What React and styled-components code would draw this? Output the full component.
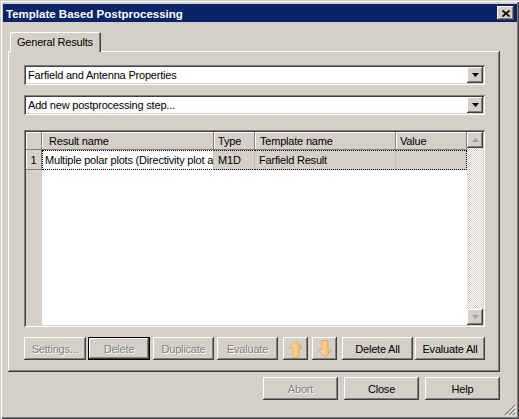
import styled, { createGlobalStyle } from "styled-components";

const GlobalStyle = createGlobalStyle`
  html, body {
    margin: 0;
    padding: 0;
    background: #d4d0c8;
  }
  body {
    font-family: "Liberation Sans", Arial, sans-serif;
    font-size: 11px;
    letter-spacing: -0.2px;
    color: #000;
  }
`;

const raised = `
  box-shadow: inset -1px -1px #404040, inset 1px 1px #fff,
    inset -2px -2px #808080, inset 2px 2px #d4d0c8;
`;

const sunken = `
  box-shadow: inset 1px 1px #808080, inset -1px -1px #fff,
    inset 2px 2px #404040, inset -2px -2px #d4d0c8;
`;

const columns = [
  { id: "res", title: "Result name", width: 172, pad: 7 },
  { id: "type", title: "Type", width: 41, pad: 4 },
  { id: "tpl", title: "Template name", width: 141, pad: 5 },
  { id: "val", title: "Value", width: 71, pad: 4 },
];

const rows = [
  {
    id: 1,
    res: "Multiple polar plots (Directivity plot a",
    type: "M1D",
    tpl: "Farfield Result",
    val: "",
  },
];

const stepButtons = [
  { label: "Settings...", width: 62, ml: 0, disabled: true },
  { label: "Delete", width: 62, ml: 2, disabled: true, isDefault: true },
  { label: "Duplicate", width: 61, ml: 3, disabled: true },
  { label: "Evaluate", width: 61, ml: 3, disabled: true },
];

const ArrowIcon = ({ down }) => (
  <svg width="14" height="18" viewBox="0 0 14 18">
    <defs>
      <linearGradient id={down ? "gd" : "gu"} x1="0" y1="0" x2="1" y2="0">
        <stop offset="0" stopColor="#fde6c0" />
        <stop offset="0.5" stopColor="#f7c98a" />
        <stop offset="1" stopColor="#eeae62" />
      </linearGradient>
    </defs>
    <path
      d={
        down
          ? "M7 17.5 L13.5 10 L10 10 L10 0.5 L4 0.5 L4 10 L0.5 10 Z"
          : "M7 0.5 L13.5 8 L10 8 L10 17.5 L4 17.5 L4 8 L0.5 8 Z"
      }
      fill={`url(#${down ? "gd" : "gu"})`}
      stroke="#e2a868"
      strokeWidth="1"
    />
  </svg>
);

const Triangle = ({ up, color = "#000" }) => (
  <svg width="7" height="4" viewBox="0 0 7 4">
    <path d={up ? "M3.5 0 L7 4 L0 4 Z" : "M0 0 L7 0 L3.5 4 Z"} fill={color} />
  </svg>
);

const App = () => {
  return (
    <>
      <GlobalStyle />
      <Window>
        <TitleBar>
          <Title>Template Based Postprocessing</Title>
          <CloseButton>
            <svg width="8" height="7" viewBox="0 0 8 7">
              <path d="M0.5 0.5 L7.5 6.5 M7.5 0.5 L0.5 6.5" stroke="#000" strokeWidth="1.6" />
            </svg>
          </CloseButton>
        </TitleBar>

        <Content>
          <TabStrip>
            <Tab>General Results</Tab>
          </TabStrip>

          <Panel>
            <Combo>
              <ComboText>Farfield and Antenna Properties</ComboText>
              <ComboArrow>
                <Triangle />
              </ComboArrow>
            </Combo>
            <Combo>
              <ComboText>Add new postprocessing step...</ComboText>
              <ComboArrow>
                <Triangle />
              </ComboArrow>
            </Combo>

            <Table>
              <Grid>
                <HeadCell $corner />
                {columns.map((c) => (
                  <HeadCell key={c.id} $pad={c.pad}>
                    {c.title}
                  </HeadCell>
                ))}
                {rows.map((r) => [
                  <RowHead key={`h${r.id}`}>{r.id}</RowHead>,
                  ...columns.map((c, i) => (
                    <DataCell
                      key={`${r.id}${c.id}`}
                      $current={i === 0}
                      $first={i === 0}
                      $last={i === columns.length - 1}
                      $pad={i === 0 ? 2 : 4}
                    >
                      {r[c.id]}
                    </DataCell>
                  )),
                ])}
                <RowHeadFill />
                <EmptyFill />
              </Grid>
              <ScrollBar>
                <ScrollButton>
                  <Triangle up color="#a0a0a0" />
                </ScrollButton>
                <Track />
                <ScrollButton>
                  <Triangle color="#a0a0a0" />
                </ScrollButton>
              </ScrollBar>
            </Table>

            <ButtonRow>
              {stepButtons.map((b) => (
                <Button
                  key={b.label}
                  $w={b.width}
                  $ml={b.ml}
                  $disabled={b.disabled}
                  $default={b.isDefault}
                >
                  {b.label}
                </Button>
              ))}
              <Button $w={25} $ml={5}>
                <ArrowIcon />
              </Button>
              <Button $w={25} $ml={4}>
                <ArrowIcon down />
              </Button>
              <Button $w={71} $ml={5}>Delete All</Button>
              <Button $w={70} $ml={2}>Evaluate All</Button>
            </ButtonRow>
          </Panel>

          <Footer>
            <Button $w={75} $h={23} $disabled>Abort</Button>
            <Button $w={75} $h={23}>Close</Button>
            <Button $w={75} $h={23}>Help</Button>
          </Footer>
        </Content>

        <Grip>
          <svg width="12" height="12" viewBox="0 0 12 12">
            <path d="M11 1 L1 11 M11 5 L5 11 M11 9 L9 11" stroke="#808080" strokeWidth="1.2" />
            <path d="M12 2 L2 12 M12 6 L6 12 M12 10 L10 12" stroke="#fff" strokeWidth="1" />
          </svg>
        </Grip>
      </Window>
    </>
  );
};

export default App;

const Window = styled.div`
  position: relative;
  width: 519px;
  height: 419px;
  box-sizing: border-box;
  padding: 4px 2px 2px 3px;
  background: #d4d0c8;
  box-shadow: inset 1px 1px #d4d0c8, inset 2px 2px #fff,
    inset -1px -1px #404040, inset -2px -2px #808080;
  overflow: hidden;
`;

const TitleBar = styled.div`
  height: 18px;
  background: #0a246a;
  display: flex;
  align-items: center;
  justify-content: space-between;
  padding: 0 3px 0 3px;
`;

const Title = styled.span`
  color: #fff;
  font-weight: bold;
  font-size: 11.5px;
  letter-spacing: 0;
  padding-top: 1px;
`;

const CloseButton = styled.div`
  width: 17px;
  height: 14px;
  display: flex;
  align-items: center;
  justify-content: center;
  background: #d4d0c8;
  ${raised}
`;

const Content = styled.div`
  width: 492px;
  margin-left: 5px;
  display: flex;
  flex-direction: column;
`;

const TabStrip = styled.div`
  display: flex;
  margin-top: 10px;
  padding-left: 2px;
  position: relative;
  z-index: 1;
  margin-bottom: -1px;
`;

const Tab = styled.div`
  width: 91px;
  height: 20px;
  box-sizing: border-box;
  padding: 4px 0 0 7px;
  background: #d4d0c8;
  border-radius: 2px 2px 0 0;
  box-shadow: inset 1px 1px #fff, inset -1px 0 #404040, inset -2px 0 #808080;
`;

const Panel = styled.div`
  box-sizing: border-box;
  padding: 14px 15px 12px 16px;
  display: flex;
  flex-direction: column;
  ${raised}
`;

const Combo = styled.div`
  height: 20px;
  box-sizing: border-box;
  padding: 2px;
  background: #fff;
  display: flex;
  align-items: stretch;
  margin-bottom: 10px;
  ${sunken}
`;

const ComboText = styled.div`
  flex: 1;
  padding-left: 2px;
  display: flex;
  align-items: center;
`;

const ComboArrow = styled.div`
  width: 16px;
  display: flex;
  align-items: center;
  justify-content: center;
  background: #d4d0c8;
  ${raised}
`;

const Table = styled.div`
  height: 197px;
  margin-top: 5px;
  box-sizing: border-box;
  padding: 2px;
  background: #fff;
  display: flex;
  ${sunken}
`;

const Grid = styled.div`
  flex: 1;
  display: grid;
  grid-template-columns: 16px ${columns.map((c) => `${c.width}px`).join(" ")};
  grid-template-rows: 18px 20px 1fr;
  overflow: hidden;
`;

const HeadCell = styled.div`
  background: #d4d0c8;
  box-sizing: border-box;
  padding-left: ${(p) => p.$pad || 0}px;
  display: flex;
  align-items: center;
  white-space: nowrap;
  overflow: hidden;
  border-right: 1px solid #808080;
  border-bottom: 1px solid #808080;
  box-shadow: inset 1px 1px #fff;
`;

const RowHead = styled.div`
  background: #d4d0c8;
  display: flex;
  align-items: center;
  justify-content: center;
  border-right: 1px solid #808080;
  border-bottom: 1px solid #808080;
  box-shadow: inset 1px 0 #fff;
`;

const DataCell = styled.div`
  background: ${(p) => (p.$current ? "#fff" : "#d4d0c8")};
  box-sizing: border-box;
  padding-left: ${(p) => p.$pad}px;
  display: flex;
  align-items: center;
  white-space: nowrap;
  overflow: hidden;
  border-top: 1px dotted #000;
  border-bottom: 1px dotted #000;
  border-left: ${(p) => (p.$first ? "1px dotted #000" : "none")};
  border-right: ${(p) => (p.$last ? "1px dotted #000" : "1px solid #c0bcb4")};
`;

const RowHeadFill = styled.div`
  background: #d4d0c8;
`;

const EmptyFill = styled.div`
  grid-column: span 4;
  background: #fff;
`;

const ScrollBar = styled.div`
  width: 16px;
  display: flex;
  flex-direction: column;
`;

const ScrollButton = styled.div`
  height: 16px;
  display: flex;
  align-items: center;
  justify-content: center;
  background: #d4d0c8;
  ${raised}
`;

const Track = styled.div`
  flex: 1;
  background-color: #fff;
  background-image: conic-gradient(#d4d0c8 25%, #fff 0 50%, #d4d0c8 0 75%, #fff 0);
  background-size: 2px 2px;
`;

const ButtonRow = styled.div`
  display: flex;
  margin-top: 10px;
`;

const Button = styled.div`
  width: ${(p) => p.$w}px;
  height: ${(p) => p.$h || 23}px;
  margin-left: ${(p) => p.$ml || 0}px;
  box-sizing: border-box;
  display: flex;
  align-items: center;
  justify-content: center;
  background: #d4d0c8;
  color: ${(p) => (p.$disabled ? "#808080" : "#000")};
  text-shadow: ${(p) => (p.$disabled ? "1px 1px #fff" : "none")};
  white-space: nowrap;
  box-shadow: ${(p) =>
    p.$default
      ? "inset 0 0 0 1px #000, inset -2px -2px #404040, inset 2px 2px #fff, inset -3px -3px #808080"
      : "inset -1px -1px #404040, inset 1px 1px #fff, inset -2px -2px #808080, inset 2px 2px #d4d0c8"};
`;

const Footer = styled.div`
  display: flex;
  justify-content: flex-end;
  gap: 6px;
  margin-top: 5px;
`;

const Grip = styled.div`
  position: absolute;
  right: 3px;
  bottom: 3px;
  width: 12px;
  height: 12px;
  display: flex;
`;
